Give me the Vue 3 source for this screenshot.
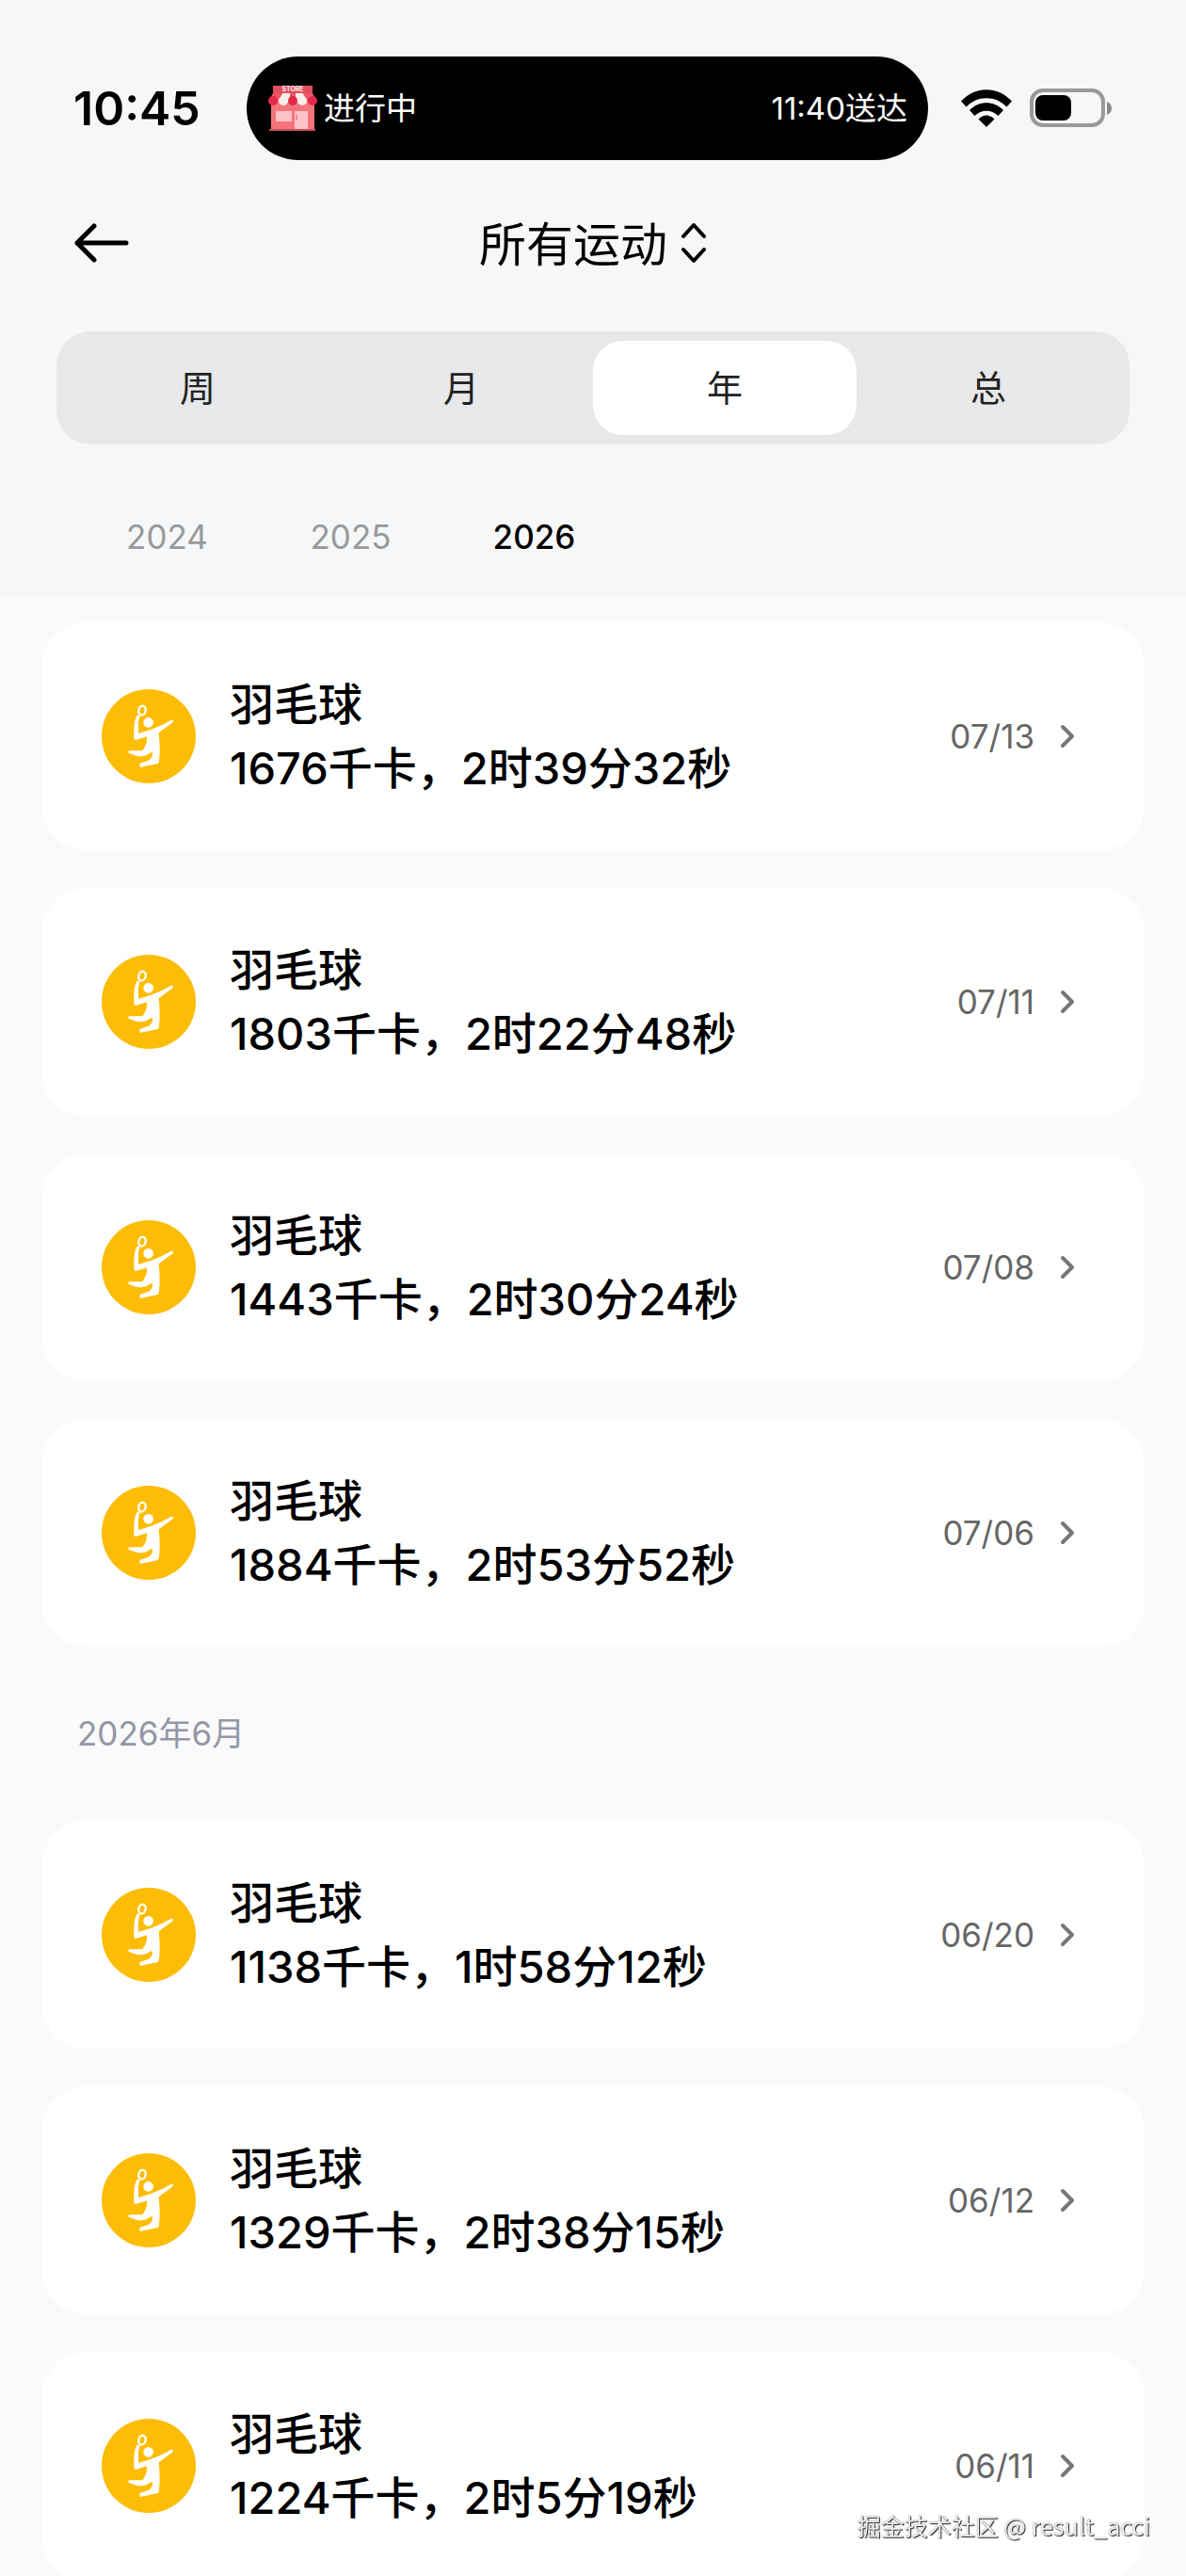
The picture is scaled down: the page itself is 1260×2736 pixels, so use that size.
<script setup>
import { ref } from 'vue'

const ranges = ['周', '月', '年', '总']
const activeRange = ref('年')

const years = ['2024', '2025', '2026']
const activeYear = ref('2026')

const groups = [
  {
    title: '',
    records: [
      { date: '07/13', kcal: 1676, duration: '2时39分32秒' },
      { date: '07/11', kcal: 1803, duration: '2时22分48秒' },
      { date: '07/08', kcal: 1443, duration: '2时30分24秒' },
      { date: '07/06', kcal: 1884, duration: '2时53分52秒' },
    ],
  },
  {
    title: '2026年6月',
    records: [
      { date: '06/20', kcal: 1138, duration: '1时58分12秒' },
      { date: '06/12', kcal: 1329, duration: '2时38分15秒' },
      { date: '06/11', kcal: 1224, duration: '2时5分19秒' },
    ],
  },
]
</script>

<template>
  <div class="page">
    <header class="header">
      <div class="status-bar">
        <span class="clock">10:45</span>
        <div class="island">
          <svg class="store" viewBox="0 0 54 50">
            <path d="M6 1h42v14H6z" fill="#e2505c" />
            <path d="M4 18h46v30H4z" fill="#f4747c" />
            <path d="M6 9h42l5 9H1z" fill="#ee5565" />
            <path d="M16 9h8v10H12zM30 9h8l4 10H30z" fill="#fdeeee" />
            <circle cx="6" cy="17" r="5" fill="#e02c48" />
            <circle cx="17" cy="17" r="5" fill="#fdeeee" />
            <circle cx="27" cy="17" r="5" fill="#e02c48" />
            <circle cx="37" cy="17" r="5" fill="#fdeeee" />
            <circle cx="48" cy="17" r="5" fill="#e02c48" />
            <path d="M9 28h17v11H9zM29 28h14v20H29z" fill="#fcc4c6" />
            <path d="M31 32v5" stroke="#e2505c" stroke-width="1" />
            <path d="M2 47h49v2H2z" fill="#c9505c" />
            <text x="27" y="7" text-anchor="middle" class="store-sign">STORE</text>
          </svg>
          <span class="island-text">进行中</span>
          <span class="island-text eta">11:40送达</span>
        </div>
        <svg class="wifi" viewBox="0 0 54 40">
          <path d="M0 12.500C15-4 39-4 54 12.500L48.500 18.500C37 6 17 6 5.500 18.500Z" />
          <path d="M9 22C19 11.500 35 11.500 45 22L39.500 28C32 21 22 21 14.500 28Z" />
          <path d="M18.500 31.500Q27 23.500 35.500 31.500L27 40Z" />
        </svg>
        <svg class="battery" viewBox="0 0 88 42">
          <rect x="2" y="2" width="76" height="37" rx="12" fill="none" stroke="#999" stroke-width="4" />
          <rect x="6" y="7" width="38" height="27" rx="8" />
          <path d="M82 14q5 2 5 7t-5 7z" fill="#888" />
        </svg>
      </div>

      <nav class="nav">
        <button type="button" class="back" aria-label="返回">
          <svg viewBox="0 0 60 44">
            <path d="M22 4L4 22L22 40M4 22H56" />
          </svg>
        </button>
        <button type="button" class="title">
          <span>所有运动</span>
          <svg viewBox="0 0 28 46">
            <path d="M3 16L14 4L25 16M3 30L14 42L25 30" />
          </svg>
        </button>
      </nav>

      <div class="segment">
        <button
          v-for="r in ranges"
          :key="r"
          type="button"
          class="segment-item"
          :class="{ active: r === activeRange }"
          @click="activeRange = r"
        >
          {{ r }}
        </button>
      </div>

      <div class="years">
        <button
          v-for="y in years"
          :key="y"
          type="button"
          class="year"
          :class="{ active: y === activeYear }"
          @click="activeYear = y"
        >
          {{ y }}
        </button>
      </div>
    </header>

    <main class="list">
      <section v-for="g in groups" :key="g.title" class="group">
        <h2 v-if="g.title" class="month">{{ g.title }}</h2>
        <a v-for="item in g.records" :key="item.date" href="#" class="card">
          <svg class="sport" viewBox="0 0 300 300">
            <circle cx="150" cy="150" r="150" fill="#fdbc06" />
            <ellipse cx="129" cy="68" rx="11" ry="15" transform="rotate(14 129 68)" fill="none" stroke="#fff" stroke-width="7" />
            <circle cx="149" cy="106" r="16" fill="#fff" />
            <path
              d="M114 82L122 86C116 100 116 122 118 141L158 128Q192 116 222 98Q229 96 227 106L182 139C185 165 187 205 182 233Q181 237 176 238L122 249L121 237L148 228Q161 222 163 203Q158 200 152 205C140 214 125 216 110 212L85 203L86 196L130 196C140 182 146 168 144 151L109 162Q103 162 103 156Q102 125 105 106Q107 93 114 82Z"
              fill="#fff"
            />
          </svg>
          <div class="info">
            <span>羽毛球</span>
            <span>{{ item.kcal }}千卡，{{ item.duration }}</span>
          </div>
          <span class="date">{{ item.date }}</span>
          <svg class="chevron" viewBox="0 0 18 28">
            <path d="M4 4L14 14L4 24" />
          </svg>
        </a>
      </section>
    </main>

    <div class="watermark">掘金技术社区 @ result_acci</div>
  </div>
</template>

<style>
body {
  background: #fafafa;
}
</style>

<style scoped>
.page {
  min-height: 100vh;
  background: #fafafa;
  color: #000;
  font-family: Inter, "Noto Sans CJK SC", sans-serif;
}

button {
  padding: 0;
  border: none;
  background: none;
  font: inherit;
  color: inherit;
  cursor: pointer;
}

.header {
  padding: 60px 60px 0;
  background: #f6f7f9;
}

/* Status bar */
.status-bar {
  display: flex;
  align-items: center;
  height: 110px;
  padding: 0 18px;
}
.clock {
  width: 184px;
  font-size: 50px;
  font-weight: 600;
}
.island {
  flex: 1;
  display: flex;
  align-items: center;
  gap: 6px;
  height: 110px;
  margin-right: 35px;
  padding: 0 22px;
  box-sizing: border-box;
  border-radius: 55px;
  background: #000;
  color: #fff;
  font-size: 33px;
}
.store {
  width: 54px;
  height: 50px;
}
.store-sign {
  font-size: 7px;
  font-weight: 600;
  fill: #fff;
}
.island-text { padding-bottom: 4px; }
.eta { margin-left: auto; }
.wifi {
  width: 54px;
  height: 40px;
  margin-right: 19px;
}
.battery {
  width: 88px;
  height: 42px;
}

/* Title row */
.nav {
  display: grid;
  grid-template-columns: 1fr auto 1fr;
  align-items: center;
  height: 100px;
  margin-top: 38px;
  padding: 0 18px;
}
.back {
  width: 60px;
  height: 44px;
}
.back svg {
  display: block;
  width: 60px;
  height: 44px;
}
.back path,
.title path {
  fill: none;
  stroke: #000;
  stroke-width: 5;
  stroke-linecap: round;
  stroke-linejoin: round;
}
.title {
  display: flex;
  align-items: center;
  gap: 14px;
  font-size: 50px;
}
.title span { padding-bottom: 4px; }
.title svg {
  width: 28px;
  height: 46px;
}
.title path { stroke-width: 4; }

/* Range switch */
.segment {
  display: flex;
  height: 120px;
  margin-top: 44px;
  padding: 10px;
  box-sizing: border-box;
  border-radius: 36px;
  background: #e7e8e9;
}
.segment-item {
  flex: 1;
  padding-bottom: 6px;
  border-radius: 32px;
  font-size: 38px;
  color: #222;
}
.segment-item.active { background: #fff; }

.years {
  display: flex;
  height: 160px;
  padding: 36px 20px 0;
  box-sizing: border-box;
}
.year {
  width: 195px;
  font-size: 35px;
  color: #999;
}
.year.active {
  font-weight: 500;
  color: #000;
}

/* Records */
.list { padding: 29px 44px 40px; }
.group {
  display: flex;
  flex-direction: column;
  gap: 40px;
}
.month {
  margin: 0;
  padding: 66px 38px 27px;
  font-size: 35px;
  line-height: 52px;
  font-weight: 400;
  color: #9397a5;
}
.card {
  display: flex;
  align-items: center;
  height: 242px;
  padding: 0 73px 0 64px;
  box-sizing: border-box;
  border-radius: 48px;
  background: #fff;
  color: #000;
  text-decoration: none;
}
.sport {
  width: 100px;
  height: 100px;
  margin-right: 36px;
}
.info {
  flex: 1;
  display: flex;
  flex-direction: column;
  font-size: 47px;
  line-height: 68px;
  font-weight: 500;
}
.date {
  font-size: 35px;
  color: #666;
}
.chevron {
  width: 18px;
  height: 28px;
  margin-left: 26px;
}
.chevron path {
  fill: none;
  stroke: #777;
  stroke-width: 4;
  stroke-linecap: round;
  stroke-linejoin: round;
}

.watermark {
  position: fixed;
  right: 38px;
  bottom: 36px;
  font-family: "Noto Sans CJK SC", sans-serif;
  font-size: 25px;
  line-height: 36px;
  color: #eee;
  text-shadow: 1px 1px 1px #222, 0 0 1px #666;
}
</style>
